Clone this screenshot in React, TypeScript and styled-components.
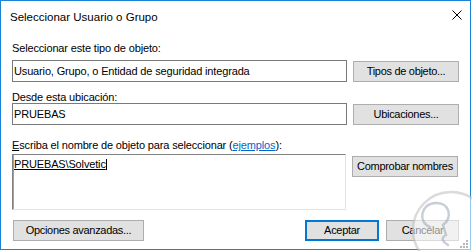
import React from "react";
import styled, { createGlobalStyle } from "styled-components";

const Global = createGlobalStyle`
  html, body { margin: 0; padding: 0; background: #fff; }
  body { font-family: "Liberation Sans", Arial, sans-serif; }
  * { box-sizing: border-box; }
`;

const Page = styled.div`
  position: relative;
  width: 472px;
  height: 251px;
  overflow: hidden;
  background: #fff;
`;

const Window = styled.div`
  width: 471px;
  height: 250px;
  border: 1px solid #1883d7;
  display: flex;
  flex-direction: column;
  background: #fff;
  color: #000;
  font-size: 11px;
  letter-spacing: -0.15px;
`;

const TitleBar = styled.div`
  display: flex;
  justify-content: space-between;
  align-items: flex-start;
  height: 29px;
  padding: 9px 8px 0 9px;
`;

const Title = styled.span`
  font-size: 11.5px;
  line-height: 14px;
  letter-spacing: 0;
`;

const CloseIcon = styled.svg`
  width: 10px;
  height: 10px;
`;

const Body = styled.div`
  display: flex;
  flex-direction: column;
  padding-left: 11px;
`;

const Label = styled.div<{ $top: number }>`
  margin-top: ${(p) => p.$top}px;
  line-height: 12px;
  height: 12px;
  white-space: nowrap;
`;

const Link = styled.span`
  color: #0066cc;
  text-decoration: underline;
`;

const Row = styled.div<{ $top: number; $align: string }>`
  margin-top: ${(p) => p.$top}px;
  display: flex;
  align-items: ${(p) => p.$align};
  gap: 6px;
`;

const Field = styled.div`
  width: 335px;
  height: 22px;
  border: 1px solid #7a7a7a;
  padding: 0 1px;
  line-height: 20px;
  white-space: nowrap;
  overflow: hidden;
`;

const TextArea = styled.div`
  width: 334px;
  height: 56px;
  border-top: 1px solid #828282;
  border-left: 1px solid #828282;
  border-right: 1px solid #e3e3e3;
  border-bottom: 1px solid #e3e3e3;
  box-shadow: inset 1px 0 0 #a0a0a0;
  padding: 2px 1px 0 1px;
  line-height: 14px;
`;

const Resolved = styled.span`
  text-decoration: underline;
`;

const Caret = styled.span`
  display: inline-block;
  width: 1px;
  height: 11px;
  background: #000;
  vertical-align: -2px;
`;

const Button = styled.button<{ $w: number; $primary?: boolean; $mt?: number }>`
  width: ${(p) => p.$w}px;
  height: 21px;
  margin: ${(p) => p.$mt ?? 0}px 0 0 0;
  padding: 0;
  background: #e1e1e1;
  border: ${(p) => (p.$primary ? "2px solid #0078d7" : "1px solid #adadad")};
  font-family: inherit;
  font-size: 11px;
  letter-spacing: -0.3px;
  line-height: 17px;
  color: #000;
  text-align: center;
  white-space: nowrap;
`;

const BottomRow = styled.div`
  margin-top: 10px;
  margin-left: 1px;
  width: 446px;
  display: flex;
  justify-content: space-between;
  align-items: center;
`;

const ButtonGroup = styled.div`
  display: flex;
  gap: 7px;
`;

const Watermark = styled.svg`
  position: absolute;
  left: 400px;
  top: 185px;
  width: 72px;
  height: 66px;
  pointer-events: none;
`;

const Grip = styled.svg`
  position: absolute;
  left: 458px;
  top: 239px;
  width: 11px;
  height: 10px;
`;

export default function App() {
  return (
    <Page>
      <Global />
      <Window>
        <TitleBar>
          <Title>Seleccionar Usuario o Grupo</Title>
          <CloseIcon viewBox="0 0 10 10">
            <path d="M0.5 0.5 L9.5 9.5 M9.5 0.5 L0.5 9.5" stroke="#000" strokeWidth="1" fill="none" />
          </CloseIcon>
        </TitleBar>
        <Body>
          <Label $top={12}>Seleccionar este tipo de objeto:</Label>
          <Row $top={6} $align="center">
            <Field>Usuario, Grupo, o Entidad de seguridad integrada</Field>
            <Button $w={106}>Tipos de objeto...</Button>
          </Row>
          <Label $top={9}>Desde esta ubicación:</Label>
          <Row $top={0} $align="center">
            <Field>PRUEBAS</Field>
            <Button $w={106}>Ubicaciones...</Button>
          </Row>
          <Label $top={14}>
            <u>E</u>scriba el nombre de objeto para seleccionar (<Link>ejemplos</Link>):
          </Label>
          <Row $top={3} $align="flex-start">
            <TextArea>
              <Resolved>PRUEBAS\Solvetic</Resolved>
              <Caret />
            </TextArea>
            <Button $w={106} $mt={2}>Comprobar nombres</Button>
          </Row>
          <BottomRow>
            <Button $w={131}>Opciones avanzadas...</Button>
            <ButtonGroup>
              <Button $w={74} $primary>Aceptar</Button>
              <Button $w={73}>Cancelar</Button>
            </ButtonGroup>
          </BottomRow>
        </Body>
      </Window>
      <Watermark viewBox="0 0 72 66">
        <circle cx="51" cy="45" r="38" fill="rgba(255,255,255,0.55)" stroke="rgba(190,190,190,0.55)" strokeWidth="2.5" />
        <path
          d="M30 42 C18 38 20 19 35 18 C50 17 53 33 43 40 L46 50 C40 53 43 57 48 60"
          fill="none"
          stroke="rgba(160,175,190,0.6)"
          strokeWidth="2.5"
          strokeLinecap="round"
        />
      </Watermark>
      <Grip viewBox="0 0 11 10">
        <rect x="8" y="1" width="2" height="2" fill="#b8b8b8" />
        <rect x="5" y="4" width="2" height="2" fill="#b8b8b8" />
        <rect x="8" y="4" width="2" height="2" fill="#b8b8b8" />
        <rect x="2" y="7" width="2" height="2" fill="#b8b8b8" />
        <rect x="5" y="7" width="2" height="2" fill="#b8b8b8" />
        <rect x="8" y="7" width="2" height="2" fill="#b8b8b8" />
      </Grip>
    </Page>
  );
}
